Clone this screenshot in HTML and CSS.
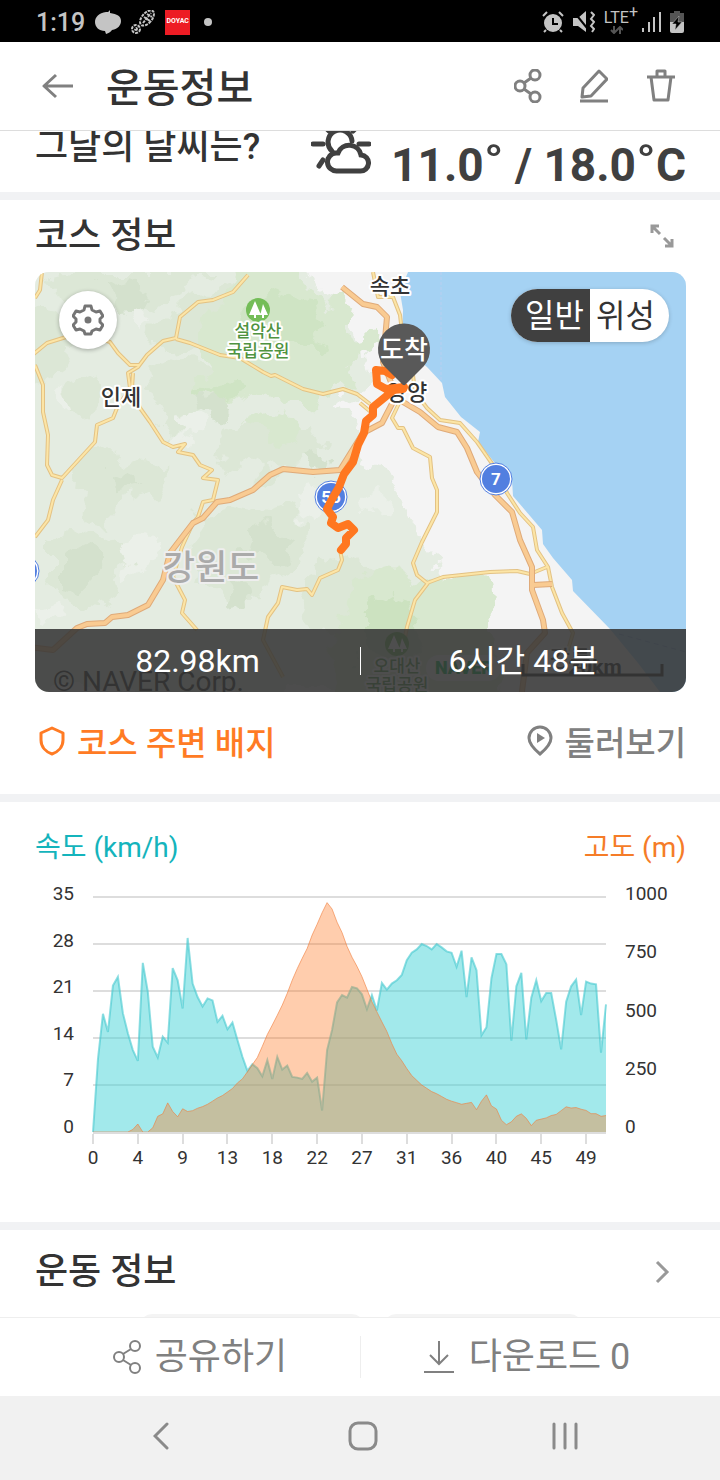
FILE: index.html
```html
<!DOCTYPE html>
<html lang="ko">
<head>
  <meta charset="UTF-8">
  <meta name="viewport" content="width=device-width, initial-scale=1.0">
  <title>운동정보</title>
  <link rel="stylesheet" href="styles.css">
</head>
<body>
  <div class="status-bar">
    <span class="clock">1:19</span>
    <svg width="26" height="24" viewBox="0 0 26 24" fill="#c4c4c4"><path d="M15 0C13 2 14 2 11 2C4 3 0 7 0 12c0 5 4 9 10 9l1 3c4-1 5-3 6-4c6-1 9-5 9-9c0-5-4-7-11-8z"/></svg>
    <svg width="24" height="24" viewBox="0 0 24 24" fill="none" stroke="#c4c4c4" stroke-width="2" stroke-dasharray="3 1"><ellipse cx="16" cy="8" rx="5" ry="9" transform="rotate(40 16 8)"/><path d="M12 13l8-10M13 7l6 4M16 4l5 3"/><circle cx="5" cy="19" r="4"/><circle cx="5" cy="19" r="1"/></svg>
    <span class="app-badge">DOYAC</span>
    <span class="more-dot"></span>
    <div class="status-right">
      <svg width="22" height="22" viewBox="0 0 22 22"><circle cx="11" cy="12" r="9" fill="#c4c4c4"/><path d="M11 7v6h5" stroke="#000" stroke-width="2" fill="none"/><path d="M1 5l4-4M21 5l-4-4M4 19l-2 2M18 19l2 2" stroke="#c4c4c4" stroke-width="2"/></svg>
      <svg width="22" height="22" viewBox="0 0 22 22"><path d="M0 7h5l8-7v21l-8-6H0z" fill="#c4c4c4"/><path d="M1 1l13 16" stroke="#000" stroke-width="2"/><path d="M18 1l3 3-3 4 3 3-3 4 3 3-2 3" stroke="#c4c4c4" stroke-width="2" fill="none"/></svg>
      <span class="lte">LTE<sup>+</sup>
        <svg width="13" height="8" viewBox="0 0 13 8" fill="none" stroke="#555" stroke-width="2"><path d="M4 0v7M1 4l3 3 3-3M10 8V1M7 4l3-3 3 3"/></svg>
      </span>
      <svg width="19" height="20" viewBox="0 0 19 20" stroke="#c4c4c4" stroke-width="2"><path d="M1 20v-4M7 20V10M12 20V5M18 20V0"/></svg>
      <svg width="14" height="22" viewBox="0 0 14 22"><path d="M4 0h6v2h4v9H0V2h4z" fill="#555"/><path d="M0 11h14v9q0 2-2 2H2q-2 0-2-2z" fill="#c4c4c4"/><path d="M9 5l-7 8h4l-1 6 7-8H8z" fill="#000" stroke="#c4c4c4" stroke-width=".5"/></svg>
    </div>
  </div>

  <header class="app-header">
    <button class="icon-btn" aria-label="뒤로">
      <svg width="32" height="28" viewBox="0 0 32 28" class="line"><path d="M31 14H2M14 3L2 14l12 11"/></svg>
    </button>
    <h1>운동정보</h1>
    <div class="header-actions">
      <button class="icon-btn" aria-label="공유">
        <svg width="28" height="34" viewBox="0 0 28 34" class="line"><circle cx="21" cy="6" r="5"/><circle cx="6" cy="17" r="5"/><circle cx="21" cy="28" r="5"/><path d="M10 14l7-5M10 20l7 5"/></svg>
      </button>
      <button class="icon-btn" aria-label="편집">
        <svg width="28" height="34" viewBox="0 0 28 34" class="line"><path d="M19 2l8 8-16 17-9 1 1-9zM0 32h28"/></svg>
      </button>
      <button class="icon-btn" aria-label="삭제">
        <svg width="30" height="34" viewBox="0 0 30 34" class="line"><path d="M1 8h28M5 8l3 23h14l3-23M11 7V2h8v5"/></svg>
      </button>
    </div>
  </header>

  <main>
    <section class="weather">
      <h2>그날의 날씨는?</h2>
      <svg width="60" height="48" viewBox="0 0 60 48" class="weather-icon"><path d="M2 18h10M30 0v2M14 1l4 4M46 1l-4 4M48 18h10M12 34l-4 6M21 25a12 12 0 1 1 20-10"/><path d="M26 45h23a8 8 0 0 0 1-16a12 12 0 0 0-23-2h-2a9 9 0 0 0 1 18z"/></svg>
      <p class="temps">11.0<span>˚</span> / 18.0<span>˚</span>C</p>
    </section>

    <section class="course">
      <div class="section-head">
        <h2>코스 정보</h2>
        <button class="icon-btn" aria-label="확대">
          <svg width="24" height="24" viewBox="0 0 24 24" fill="none" stroke="#999" stroke-width="3"><path d="M2 9V2h7M2 2l8 8M22 15v7h-7M22 22l-8-8"/></svg>
        </button>
      </div>

      <div class="map">
        <svg class="map-canvas" viewBox="0 0 651 420" role="img" aria-label="코스 지도">
          <defs>
            <filter id="rough" x="-5%" y="-5%" width="110%" height="110%">
              <feTurbulence type="fractalNoise" baseFrequency="0.03" numOctaves="4" seed="4"/>
              <feDisplacementMap in="SourceGraphic" scale="44" xChannelSelector="R" yChannelSelector="G"/>
            </filter>
          </defs>
          <rect width="651" height="420" fill="#f4f4f4"/>
          <!-- terrain -->
          <g filter="url(#rough)">
            <path fill="#e4ece1" d="M-30-30h290l22 52 26 8 12 18 12 24 2 26-12 22-24 14 12 18 6 26 10 16 22 8 16 20 14 24 18 10-4 36 20 14 6 20v94H-30z"/>
            <path fill="#dce7d6" d="M18 8l30-8h120l-14 22-26 10-18-8-20 14-24-4-8 12-26-10zM150 30l34-14 26 6-4 22-30 12-26 20-30 4 4-24zM-20 36l44 6 16 22-16 14 8 20-20 14-32-8zM112 96l36-12 28 8 20 22-10 24-28 4-22 22-18-10 6-20-18-16zM34 112l22-10 10 14-14 24-22 4zM44 186l26-6 24 12 14-6 26 12-12 24-36 8-8 20-26-4-14-22zM190 150l24 4 18-10 32 12 18-8 14 20-12 22-34 4-22 10-38-8-14-20zM10 270l34-14 26 10 26-2 14 18-26 20 8 22-38 12-28-14-16-24zM160 250l32-14 36 6 24-8 26 20-8 30-36 16-10 28-46 6-22-28 8-28zM290 292l30-10 18 16 30 6-6 30-30 10-22 22-30-8-10-30z"/>
            <path fill="#d4e1cd" d="M62 12l30-6 30 14-20 20-22 2zM170 118l22 6 6 18-22 10-14-14zM74 198l18 4 10 18-26 4zM212 256l28-8 14 22-22 24-24-12zM24 290l24-12 22 14-20 22-26-4zM190 306l22 6 2 22-26 4zM280 178l16 12-14 10-14-8z"/>
            <path fill="#ebf0e9" d="M98 38l16-4 10 16-18 14zM18 122l12-4 4 22-14 8zM134 146l20-8 14 10-8 16-20 4zM98 262l20 6-4 26-16 10-6-20zM262 216l20-6 14 18-12 22-18-6zM0 340l24-8 10 16-22 12zM330 216l20 10-2 26-20-4z"/>
            <path fill="#d8e8cf" d="M206-10h46l20 24 14 18 30-6 10 14-12 14 18 18-8 14-12 4 8 22-24 10-12-6-4 12-28 4-18-8-16 8-30-4-20-14 2-22-14-22 14-32 24-12zM220 146l30-10 14 18-6 18-18 4zM325 66l16-4 4 14-16 6z"/>
            <path fill="#cfe4c4" d="M216 22l26-6 30 12 18 26-12 26-30-2-18-20-20-4zM166 110l26-4 14 18-28 6z"/>
            <path fill="#d8e8cf" d="M318 314l18-16 28-8 20 24 20-10 44 6 4 34-10 22 22 22 8 62H310l-12-78z"/>
            <path fill="#cce2c0" d="M330 334l24-14 22 14 6 34-20 24-32-8z"/>
          </g>
          <!-- sea -->
          <path fill="#a5d2f3" d="M373 0l-8 20 3 18-1 26 10 18 15 13 15 16 3 14 16 20 19 15-2 10 16 20 18 18 1 16 29 34 1 14 10 14 19 22 1 11 37 38 28 34 22 29h46V0z"/>
          <path fill="none" stroke="#b9cff0" stroke-dasharray="3 2" d="M406 0v110"/>
          <path fill="none" stroke="#82aee0" stroke-dasharray="5 4" d="M584 362l67 18"/>
          <!-- small roads, casing first -->
          <path class="road-case" d="M7 0L5 18 0 26M-5 85l17-14 16-5 17-6 30 10 8 11 12 12h10M213 3l-15 17-20 8-15 2-18 15-4 21-13 3-16 14-9 12-10 6 2 15-13 20-4 10-16 7-2 17-33 36-10-3-5-10 1-30-5-23V113L0 93M141 67l14 4 30 12 20 3 23 14 8 4 4-1 8 4 20 10 20 5 20-5 14 5 13 10M98 101l-1 15 8 20 10 14 13 20 10 5 12-3-7 8 15 3 7 10 12 5-9 8 15 2-5 20-10 2-5 15-5 6-11 24-9 30 12 23-3 13 15 17M27 208l-9 20-5 20-13 17M305 278l2 10-4 10-18 8-8 17-5-6-10 1-15-3-4 16-10 14-5 23 20 37M338 0l5 25h15l7 18 2 17M378 103l2 17 12 16 13 12 20 3 17 19 16 23 14 28 13 20 13 14 4 23 11 17 4 20 10 26 11 20-10 34M368 123l-11 23 6 10h5l10 20 17 9 2 21 5 12v22l-15 30-9 21 4 12 10 8 16-6 47-5 27-1 13 3 17-7M393 311l-13 17-8 27-4 20M325 131l12 10"/>
          <path class="road" d="M7 0L5 18 0 26M-5 85l17-14 16-5 17-6 30 10 8 11 12 12h10M213 3l-15 17-20 8-15 2-18 15-4 21-13 3-16 14-9 12-10 6 2 15-13 20-4 10-16 7-2 17-33 36-10-3-5-10 1-30-5-23V113L0 93M141 67l14 4 30 12 20 3 23 14 8 4 4-1 8 4 20 10 20 5 20-5 14 5 13 10M98 101l-1 15 8 20 10 14 13 20 10 5 12-3-7 8 15 3 7 10 12 5-9 8 15 2-5 20-10 2-5 15-5 6-11 24-9 30 12 23-3 13 15 17M27 208l-9 20-5 20-13 17M305 278l2 10-4 10-18 8-8 17-5-6-10 1-15-3-4 16-10 14-5 23 20 37M338 0l5 25h15l7 18 2 17M378 103l2 17 12 16 13 12 20 3 17 19 16 23 14 28 13 20 13 14 4 23 11 17 4 20 10 26 11 20-10 34M368 123l-11 23 6 10h5l10 20 17 9 2 21 5 12v22l-15 30-9 21 4 12 10 8 16-6 47-5 27-1 13 3 17-7M393 311l-13 17-8 27-4 20M325 131l12 10"/>
          <!-- highways -->
          <path class="highway-case" d="M307 15l21 17 14 3 10 10-1 11-3 34 9 23 11 17 17 10 18 15 19 5 10 16 10 24 18 23 17 17 8 28 12 27v23l11 30 2 13-18 20-6 46M498 313l19-1M360 126l-13 25-19 10-23 37-27 2-30-3-13 6-17 15-23 10-13 2-14 16-10 5-23 30-7 27-15 25-20 10-16 2-7 6-18 1-10 4-24 22-23-3"/>
          <path class="highway" d="M307 15l21 17 14 3 10 10-1 11-3 34 9 23 11 17 17 10 18 15 19 5 10 16 10 24 18 23 17 17 8 28 12 27v23l11 30 2 13-18 20-6 46M498 313l19-1M360 126l-13 25-19 10-23 37-27 2-30-3-13 6-17 15-23 10-13 2-14 16-10 5-23 30-7 27-15 25-20 10-16 2-7 6-18 1-10 4-24 22-23-3"/>
          <!-- park markers -->
          <g fill="#74bd58"><circle cx="223" cy="38" r="12"/><path fill="#fff" d="M220 29l6 14h-5v3h-2v-3h-5zM228 32l5 11h-4v3h-2v-3h-2l1-3z"/></g>
          <g fill="#74bd58"><circle cx="362" cy="372" r="12"/><path fill="#fff" d="M359 363l6 14h-5v3h-2v-3h-5zM367 366l5 11h-4v3h-2v-3h-2l1-3z"/></g>
          <g class="place park"><text x="223" y="65">설악산</text><text x="223" y="85">국립공원</text><text x="362" y="400">오대산</text><text x="362" y="419">국립공원</text></g>
          <g class="place city"><text x="86" y="133">인제</text><text x="355" y="22">속초</text><text x="372" y="128">양양</text><text x="535" y="394">강릉</text></g>
          <text class="place region" x="176" y="308">강원도</text>
          <!-- road numbers -->
          <g class="shield"><circle class="ring" cx="-12" cy="299" r="16"/><circle cx="-12" cy="299" r="14"/><circle class="ring" cx="296" cy="225" r="16"/><circle cx="296" cy="225" r="14"/><text x="296" y="231">56</text><circle class="ring" cx="461" cy="207" r="16"/><circle cx="461" cy="207" r="14"/><text x="461" y="213">7</text></g>
          <!-- ridden course -->
          <path class="course-line" d="M357 103l-7-4-9-1 1 14 9 5 18-2-9 2-11 9-11 9v8l-7 6-2 12-6 12-5 17-9 12-5 13-8 14-4 8 6 8-2 6 7 5 10-4 6 6-8 8v6l-5 6"/>
          <path fill="#595959" d="M369 114l-20-20a26 26 0 1 1 40 0z"/>
          <path class="course-line" d="M358 118l10-1"/>
          <text class="pin-text" x="369" y="87">도착</text>
          <!-- attribution and scale -->
          <text class="credit" x="18" y="419">© NAVER Corp.</text>
          <rect x="391" y="383" width="75" height="26" rx="13" fill="#f4f6f4"/>
          <text class="naver" x="400" y="402">NAVER</text>
          <path d="M488 392v11h139v-11" fill="none" stroke="#222" stroke-width="3"/>
          <text class="scale" x="560" y="402">20km</text>
        </svg>
        <button class="map-settings" aria-label="지도 설정">
          <svg width="32" height="32" viewBox="0 0 32 32" fill="none" stroke="#757575" stroke-width="3" stroke-linejoin="round"><path d="M13 2h6l1 4 4 2 4-1 3 5-3 3v3l3 3-3 5-4-1-4 2-1 3h-6l-1-3-4-2-4 1-3-5 3-3v-3l-3-3 3-5 4 1 4-2z"/><circle cx="16" cy="16" r="2" fill="#757575"/></svg>
        </button>
        <div class="map-type">
          <button class="active">일반</button>
          <button>위성</button>
        </div>
        <div class="map-summary">
          <span>82.98km</span>
          <span>6시간 48분</span>
        </div>
      </div>

      <div class="course-links">
        <a href="#" class="badge-link">
          <svg width="26" height="30" viewBox="0 0 26 30" fill="none" stroke="#ff7b24" stroke-width="3" stroke-linejoin="round"><path d="M13 2l11 5v7c0 7-5 12-11 14C7 26 2 21 2 14V7z"/></svg>
          코스 주변 배지
        </a>
        <a href="#">
          <svg width="26" height="32" viewBox="0 0 26 32" fill="none" stroke="#808080" stroke-width="3"><path d="M13 29C7 24 2 19 2 13a11 11 0 0 1 22 0c0 6-5 11-11 16z"/><path d="M10 8l8 5-8 5z" fill="#808080" stroke="none"/></svg>
          둘러보기
        </a>
      </div>
    </section>

    <section class="chart">
      <div class="chart-titles">
        <h3 class="speed">속도 (km/h)</h3>
        <h3 class="altitude">고도 (m)</h3>
      </div>
      <div class="chart-grid">
        <div class="y-axis left"><span>35</span><span>28</span><span>21</span><span>14</span><span>7</span><span>0</span></div>
        <svg class="plot" viewBox="0 0 103 35" preserveAspectRatio="none" role="img" aria-label="속도와 고도">
          <path class="grid-line" d="M0 0h103M0 7h103M0 14h103M0 21h103M0 28h103"/>
          <polygon id="speedArea" class="speed-area"/>
          <polyline id="speedLine" class="speed-line"/>
          <polygon id="altArea" class="alt-area"/>
          <polyline id="altLine" class="alt-line"/>
        </svg>
        <div class="y-axis right"><span>1000</span><span>750</span><span>500</span><span>250</span><span>0</span></div>
        <div class="x-axis"><span>0</span><span>4</span><span>9</span><span>13</span><span>18</span><span>22</span><span>27</span><span>31</span><span>36</span><span>40</span><span>45</span><span>49</span></div>
      </div>
    </section>

    <section class="workout">
      <div class="section-head">
        <h2>운동 정보</h2>
        <button class="icon-btn" aria-label="더보기">
          <svg width="16" height="24" viewBox="0 0 16 24" fill="none" stroke="#999" stroke-width="3"><path d="M3 2l10 10L3 22"/></svg>
        </button>
      </div>
      <div class="chips"><span></span><span></span></div>
    </section>
  </main>

  <footer class="bottom-actions">
    <button>
      <svg width="28" height="34" viewBox="0 0 28 34"><circle cx="22" cy="6" r="5"/><circle cx="6" cy="17" r="5"/><circle cx="22" cy="28" r="5"/><path d="M10 14l8-5M10 20l8 5"/></svg>
      공유하기
    </button>
    <button>
      <svg width="32" height="34" viewBox="0 0 32 34"><path d="M16 1v23M7 15l9 9 9-9M1 32h30"/></svg>
      다운로드 0
    </button>
  </footer>

  <nav class="system-nav">
    <button aria-label="뒤로"><svg width="16" height="28" viewBox="0 0 16 28"><path d="M14 2L2 14l12 12"/></svg></button>
    <button aria-label="홈"><svg width="30" height="30" viewBox="0 0 30 30"><rect x="2" y="2" width="26" height="26" rx="8"/></svg></button>
    <button aria-label="최근 앱"><svg width="26" height="28" viewBox="0 0 26 28"><path d="M2 2v24M13 2v24M24 2v24"/></svg></button>
  </nav>

  <script>
    const speed = [
      0, 10.9, 17.6, 14.9, 21.8, 23.1, 17.7, 14.7, 12.2, 10.6, 25.2, 20.9, 12.7, 11.1, 14.2, 13.3, 24.4, 22.6, 18.4, 28.9,
      22.1, 20.1, 18.7, 19.9, 19.6, 16.4, 17.3, 15.3, 16.3, 13.7, 11.2, 9.1, 10.1, 9.5, 8.3, 10.7, 7.9, 11.2, 9.3, 9.9,
      8.2, 8.1, 7.9, 8.8, 7.5, 8.1, 3.2, 12.2, 15.2, 19.3, 20.4, 20, 21.6, 21.4, 20.5, 18.3, 20.4, 18.1, 22.2, 21.2,
      22.1, 22.6, 23.4, 25.6, 26.7, 27.2, 28, 27.7, 27.2, 28, 27.5, 26.9, 26.7, 24.6, 27, 20.1, 26, 24.1, 14.4, 15.6,
      22.9, 26.5, 26.5, 25, 13.6, 21.7, 23.7, 13.8, 20, 22.6, 19.5, 20.7, 20.7, 16.7, 12.3, 19.4, 21.7, 22.7, 17.4, 22.4,
      22.1, 22, 11.8, 19
    ];
    const altitude = [
      0, 0, 0, 0, 0, 0, 0, 0, 11, 34, 0, 0, 18, 67, 77, 124, 87, 65, 99, 87,
      91, 101, 108, 118, 131, 145, 155, 170, 185, 209, 226, 256, 287, 317, 365, 415, 455, 497, 540, 590,
      646, 695, 739, 781, 838, 884, 933, 976, 949, 893, 849, 790, 744, 705, 661, 608, 554, 511, 469, 428,
      376, 331, 303, 270, 240, 220, 200, 186, 172, 163, 151, 139, 131, 125, 118, 122, 126, 95, 131, 158,
      111, 98, 50, 31, 43, 67, 77, 58, 27, 50, 55, 60, 70, 75, 91, 107, 102, 104, 97, 92,
      78, 78, 67, 70
    ];

    function drawSeries(values, max, areaId, lineId) {
      const points = values.map((v, i) => i + ',' + (35 - v / max * 35).toFixed(2)).join(' ');
      document.getElementById(lineId).setAttribute('points', points);
      document.getElementById(areaId).setAttribute('points', '0,35 ' + points + ' 103,35');
    }

    drawSeries(speed, 35, 'speedArea', 'speedLine');
    drawSeries(altitude, 1000, 'altArea', 'altLine');
  </script>
</body>
</html>
```
FILE: styles.css
```css
* { box-sizing: border-box; }
body { margin: 0; height: 100vh; display: flex; flex-direction: column; font-family: Roboto, "Noto Sans CJK KR", sans-serif; background: #fff; color: #333; }
h1, h2, h3, p { margin: 0; font-weight: 500; }
button { padding: 0; border: none; background: none; font: inherit; color: inherit; cursor: pointer; }
a { color: inherit; text-decoration: none; }
svg { display: block; flex: none; }

.status-bar { flex: none; height: 42px; padding: 2px 36px 0; display: flex; align-items: center; gap: 10px; background: #000; color: #c4c4c4; }
.clock { font-size: 25px; font-weight: 500; }
.app-badge { width: 25px; height: 25px; background: #ed1c24; color: #fff; font-size: 7px; font-weight: bold; line-height: 23px; text-align: center; }
.more-dot { width: 8px; height: 8px; margin-left: 4px; border-radius: 50%; background: #c4c4c4; }
.status-right { margin-left: auto; display: flex; align-items: center; gap: 9px; }
.lte { position: relative; margin-right: -5px; font-size: 16px; line-height: 16px; padding-bottom: 8px; white-space: nowrap; }
.lte sup { font-size: 16px; line-height: 0; }
.lte svg { position: absolute; left: 6px; bottom: 0; }

.app-header { flex: none; height: 89px; padding: 0 44px 0 42px; display: flex; align-items: center; border-bottom: 1px solid #ddd; }
.app-header h1 { margin-left: 32px; padding-top: 6px; font-size: 40px; line-height: 48px; }
.header-actions { margin-left: auto; display: flex; gap: 38px; }
.line { fill: none; stroke: #808080; stroke-width: 3; stroke-linejoin: round; }

main { flex: 1; min-height: 0; overflow: hidden; background: #f1f2f4; }
section { background: #fff; margin-bottom: 8px; padding: 0 34px 0 35px; }
h2 { font-size: 36px; line-height: 48px; }

.weather { height: 85px; margin-top: -24px; display: flex; align-items: center; }
.weather h2 { margin-bottom: 6px; }
.weather-icon { margin-left: auto; fill: none; stroke: #404040; stroke-width: 5; stroke-linecap: round; }
.temps { margin: 30px 0 0 20px; font-size: 46px; line-height: 48px; font-weight: bold; color: #404040; white-space: nowrap; }
.temps span { font-size: 60px; line-height: 0; vertical-align: -8px; }

.section-head { display: flex; align-items: center; justify-content: space-between; height: 72px; padding-right: 12px; }

.map { position: relative; border-radius: 14px; overflow: hidden; }
.map-canvas { width: 100%; height: auto; }
.road-case, .road, .highway-case, .highway { fill: none; stroke-linejoin: round; }
.road-case { stroke: #e3c284; stroke-width: 4; }
.road { stroke: #fce5a6; stroke-width: 2; }
.highway-case { stroke: #dfaa79; stroke-width: 6; }
.highway { stroke: #f9cb92; stroke-width: 4; }
.place { text-anchor: middle; paint-order: stroke; stroke: #fff; stroke-width: 4; stroke-linejoin: round; font-weight: 500; }
.park { font-size: 17px; fill: #4f9340; }
.city { font-size: 22px; fill: #333; }
.region { font-size: 35px; fill: #aaa; stroke: #eee; }
.shield { fill: #527fe0; }
.shield .ring { stroke: #527fe0; fill: #fff; stroke-width: 1; }
.shield text { fill: #fff; font-size: 17px; font-weight: bold; text-anchor: middle; }
.course-line { fill: none; stroke: #ff7720; stroke-width: 8; stroke-linecap: round; stroke-linejoin: round; }
.pin-text { font-size: 26px; font-weight: 500; fill: #fff; text-anchor: middle; }
.credit { font-size: 28px; fill: #222; }
.naver { font-size: 18px; font-weight: 900; fill: #03b34a; }
.scale { font-size: 21px; font-weight: bold; fill: #222; text-anchor: middle; }

.map-settings { position: absolute; left: 24px; top: 19px; width: 58px; height: 58px; border-radius: 50%; background: #fff; display: flex; align-items: center; justify-content: center; box-shadow: 0 1px 4px rgba(0, 0, 0, .3); }
.map-type { position: absolute; right: 17px; top: 17px; display: flex; height: 53px; border-radius: 27px; overflow: hidden; background: #fff; box-shadow: 0 1px 4px rgba(0, 0, 0, .2); }
.map-type button { width: 79px; padding: 0 14px 0 6px; font-size: 32px; line-height: 50px; white-space: nowrap; }
.map-type .active { padding: 0 6px 0 14px; background: #404040; color: #fff; }
.map-summary { position: absolute; left: 0; right: 0; bottom: 0; height: 63px; display: flex; align-items: center; background: rgba(54, 54, 54, .88); color: #fff; font-size: 32px; line-height: 28px; }
.map-summary span { flex: 1; text-align: center; }
.map-summary span + span { border-left: 1px solid #fff; }

.course-links { height: 102px; padding: 0 0 4px 4px; display: flex; align-items: center; justify-content: space-between; font-size: 33px; font-weight: 500; color: #808080; }
.course-links a { display: flex; align-items: center; gap: 12px; }
.course-links .badge-link { color: #ff7b24; }

.chart { height: 420px; padding-top: 24px; }
.chart-titles { display: flex; justify-content: space-between; }
.chart-titles h3 { font-size: 28px; line-height: 44px; font-weight: normal; }
.speed { color: #14b4bc; }
.altitude { color: #f57c28; }
.chart-grid { display: grid; grid-template-columns: 41px 1fr 61px; column-gap: 19px; margin-top: 27px; margin-left: -2px; }
.plot { width: 100%; height: 235px; overflow: visible; }
.y-axis { display: flex; flex-direction: column; justify-content: space-between; margin: -13px 0 -5px; font-size: 19px; line-height: 20px; }
.left { text-align: right; }
.grid-line, .speed-line, .alt-line { fill: none; vector-effect: non-scaling-stroke; }
.grid-line { stroke: #ddd; stroke-width: 2px; }
.speed-area { fill: rgba(69, 211, 215, .5); }
.speed-line { stroke: rgba(69, 200, 206, .6); stroke-width: 2px; }
.alt-area { fill: rgba(255, 119, 32, .37); }
.alt-line { stroke: rgba(240, 125, 60, .6); stroke-width: 1px; }
.x-axis { grid-column: 2; display: grid; grid-template-columns: repeat(11, 9fr) 4fr; border-top: 2px solid #ddd; font-size: 19px; line-height: 24px; }
.x-axis span { width: 0; display: flex; flex-direction: column; align-items: center; }
.x-axis span::before { content: ""; width: 2px; height: 10px; margin-bottom: 2px; background: #ddd; }

.workout { margin-bottom: 0; height: 100px; }
.workout .section-head { height: 84px; padding-right: 16px; }
.chips { display: flex; gap: 20px; padding-left: 105px; }
.chips span { width: 224px; height: 40px; border-radius: 12px; background: #f4f4f4; }
.chips span + span { width: 198px; }

.bottom-actions { flex: none; height: 79px; display: flex; align-items: center; border-top: 1px solid #eee; }
.bottom-actions button { width: 50%; height: 42px; display: flex; align-items: center; justify-content: center; gap: 14px; padding-left: 40px; font-size: 36px; line-height: 40px; color: #808080; }
.bottom-actions button + button { padding: 0 28px 0 0; border-left: 1px solid #eee; }
.bottom-actions svg { fill: none; stroke: #808080; stroke-width: 2; }

.system-nav { flex: none; height: 84px; padding: 0 54px 4px 60px; display: flex; background: #f1f1f1; }
.system-nav button { flex: 1; display: flex; align-items: center; justify-content: center; }
.system-nav svg { fill: none; stroke: #8a8a8a; stroke-width: 3; stroke-linecap: round; }
```
